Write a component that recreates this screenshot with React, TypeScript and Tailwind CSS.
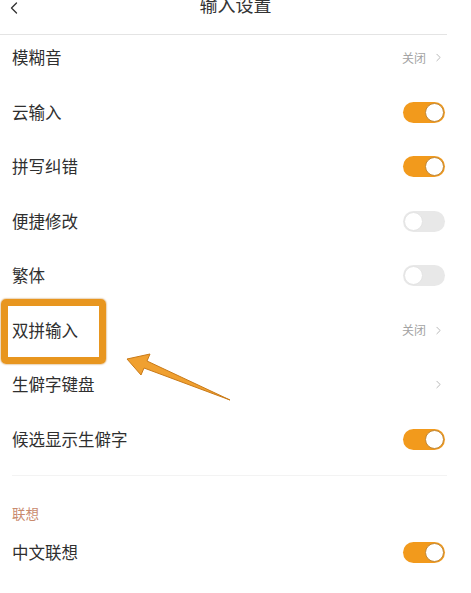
import { ChevronLeft, ChevronRight } from "lucide-react";

type Row = {
  label: string;
  kind: "value" | "toggle" | "link";
  value?: string;
  on?: boolean;
};

const INPUT_ROWS: Row[] = [
  { label: "模糊音", kind: "value", value: "关闭" },
  { label: "云输入", kind: "toggle", on: true },
  { label: "拼写纠错", kind: "toggle", on: true },
  { label: "便捷修改", kind: "toggle", on: false },
  { label: "繁体", kind: "toggle", on: false },
  { label: "双拼输入", kind: "value", value: "关闭" },
  { label: "生僻字键盘", kind: "link" },
  { label: "候选显示生僻字", kind: "toggle", on: true },
];

function Toggle({ on }: { on: boolean }) {
  return (
    <div
      className={`flex h-[21px] w-[42px] items-center rounded-full px-[1px] ${
        on ? "justify-end bg-[#f29a1c]" : "justify-start bg-[#e8e8e8]"
      }`}
    >
      <div
        className={`h-[19px] w-[19px] rounded-full bg-white ${
          on ? "border border-[#c08838]" : "border border-[#e4e4e4]"
        }`}
      />
    </div>
  );
}

function SettingRow({ row }: { row: Row }) {
  return (
    <div className="flex h-[54.5px] items-start justify-between pl-[12px] pr-[26px] pt-[10px]">
      <span className="text-[16.5px] leading-[25px] text-[#2f2f2f]">{row.label}</span>
      <div className="flex h-[25px] items-center">
        {row.kind === "toggle" && <Toggle on={!!row.on} />}
        {row.kind === "value" && (
          <span className="flex items-center gap-[6px] text-[12px] text-[#a3a3a3]">
            {row.value}
            <ChevronRight className="h-[13px] w-[13px]" strokeWidth={1.4} />
          </span>
        )}
        {row.kind === "link" && (
          <ChevronRight className="h-[13px] w-[13px] text-[#a3a3a3]" strokeWidth={1.4} />
        )}
      </div>
    </div>
  );
}

export default function App() {
  return (
    <div
      className="relative h-[593px] w-[471px] overflow-hidden bg-white"
      style={{ fontFamily: '"Noto Sans CJK SC", "Noto Sans", sans-serif' }}
    >
      {/* top bar */}
      <div className="relative flex h-[35px] items-start justify-center">
        <ChevronLeft className="absolute left-[4px] top-[-2px] h-[20px] w-[20px] text-[#333]" strokeWidth={1.6} />
        <span className="-mt-[8px] text-[18px] leading-[24px] text-[#333]">输入设置</span>
        <div className="absolute bottom-0 left-0 h-px w-[447px] bg-[#e4e4e4]" />
      </div>

      <div className="flex flex-col">
        {INPUT_ROWS.map((row) => (
          <SettingRow key={row.label} row={row} />
        ))}
      </div>

      <div className="mx-[12px] mt-[4px] h-px w-[435px] bg-[#f3f3f3]" />

      <div className="h-[54px] pl-[12px] pt-[24px]">
        <span className="text-[13.5px] leading-[20px] text-[#c98a6e]">联想</span>
      </div>

      <SettingRow row={{ label: "中文联想", kind: "toggle", on: true }} />
      <SettingRow row={{ label: "英文联想", kind: "toggle", on: true }} />

      {/* highlight box */}
      <div className="pointer-events-none absolute left-[1px] top-[299px] h-[65px] w-[105px] rounded-[5px] border-[7px] border-[#e8961f] shadow-[0_0_2px_#b86e10]" />

      {/* arrow */}
      <svg
        className="pointer-events-none absolute left-0 top-0"
        width="471"
        height="593"
        viewBox="0 0 471 593"
      >
        <polygon
          points="127,359 150,354 147,361 230,400 144,368 141,375"
          fill="#f0a030"
          stroke="#c97a18"
          strokeWidth="1"
          strokeLinejoin="round"
        />
      </svg>
    </div>
  );
}
